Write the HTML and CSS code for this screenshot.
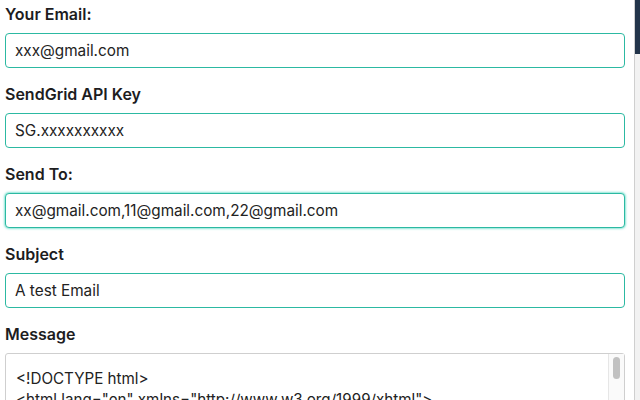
FILE: index.html
```html
<!DOCTYPE html>
<html lang="en">
<head>
<meta charset="utf-8">
<title>SendGrid Mailer</title>
<link rel="stylesheet" href="styles.css">
</head>
<body>
<div class="page">
  <form class="form">
    <div class="field">
      <label class="label">Your Email:</label>
      <input class="input" type="text" value="xxx@gmail.com">
    </div>
    <div class="field">
      <label class="label">SendGrid API Key</label>
      <input class="input" type="text" value="SG.xxxxxxxxxx">
    </div>
    <div class="field">
      <label class="label">Send To:</label>
      <input class="input input-focus" type="text" value="xx@gmail.com,11@gmail.com,22@gmail.com">
    </div>
    <div class="field">
      <label class="label">Subject</label>
      <input class="input" type="text" value="A test Email">
    </div>
    <div class="field">
      <label class="label">Message</label>
      <div class="textarea">
        <div class="textarea-text">&lt;!DOCTYPE html&gt;<br>&lt;html lang="en" xmlns="http://www.w3.org/1999/xhtml"&gt;<br>&lt;head&gt;</div>
        <div class="scroll-track"><div class="scroll-thumb"></div></div>
      </div>
    </div>
  </form>
  <div class="edge">
    <div class="edge-dark"></div>
  </div>
</div>
</body>
</html>
```

FILE: styles.css
```css
html, body {
  margin: 0;
  padding: 0;
  background: #fff;
  overflow: hidden;
}
.page {
  display: flex;
  height: 400px;
  width: 640px;
}
.form {
  width: 635px;
  box-sizing: border-box;
  padding: 4px 10px 0 5px;
  font-family: Inter, "Liberation Sans", sans-serif;
  color: #212529;
  border-right: 1px solid #cfcfcf;
}
.field {
  margin-bottom: 16px;
}
.label {
  display: block;
  font-size: 16px;
  line-height: 20px;
  font-weight: 600;
  margin-bottom: 9px;
  color: #1d1d1f;
}
.input {
  display: block;
  box-sizing: border-box;
  width: 620px;
  height: 35px;
  margin: 0;
  padding: 0 9px;
  border: 1px solid #2cb9a2;
  border-radius: 4px;
  font-family: Inter, "Liberation Sans", sans-serif;
  font-size: 15.3px;
  color: #222;
  background: #fff;
  outline: none;
}
.input-focus {
  box-shadow: 0 0 2px 1px rgba(44, 210, 180, 0.55);
}
.textarea {
  box-sizing: border-box;
  width: 620px;
  height: 80px;
  border: 1px solid #cfcfcf;
  border-radius: 3px;
  display: flex;
  justify-content: space-between;
}
.textarea-text {
  padding: 14px 0 0 10px;
  font-size: 15.2px;
  line-height: 21px;
  color: #222;
  white-space: nowrap;
  overflow: hidden;
}
.scroll-track {
  width: 15px;
  flex: none;
  border-left: 1px solid #e6e6e6;
  background: #fafafa;
  display: flex;
  justify-content: center;
  padding-top: 3px;
}
.scroll-thumb {
  width: 7px;
  height: 22px;
  border-radius: 4px;
  background: #c1c1c1;
}
.edge {
  flex: 1;
  background: #f2f2f2;
}
.edge-dark {
  height: 54px;
  background: #22344a;
}
```
